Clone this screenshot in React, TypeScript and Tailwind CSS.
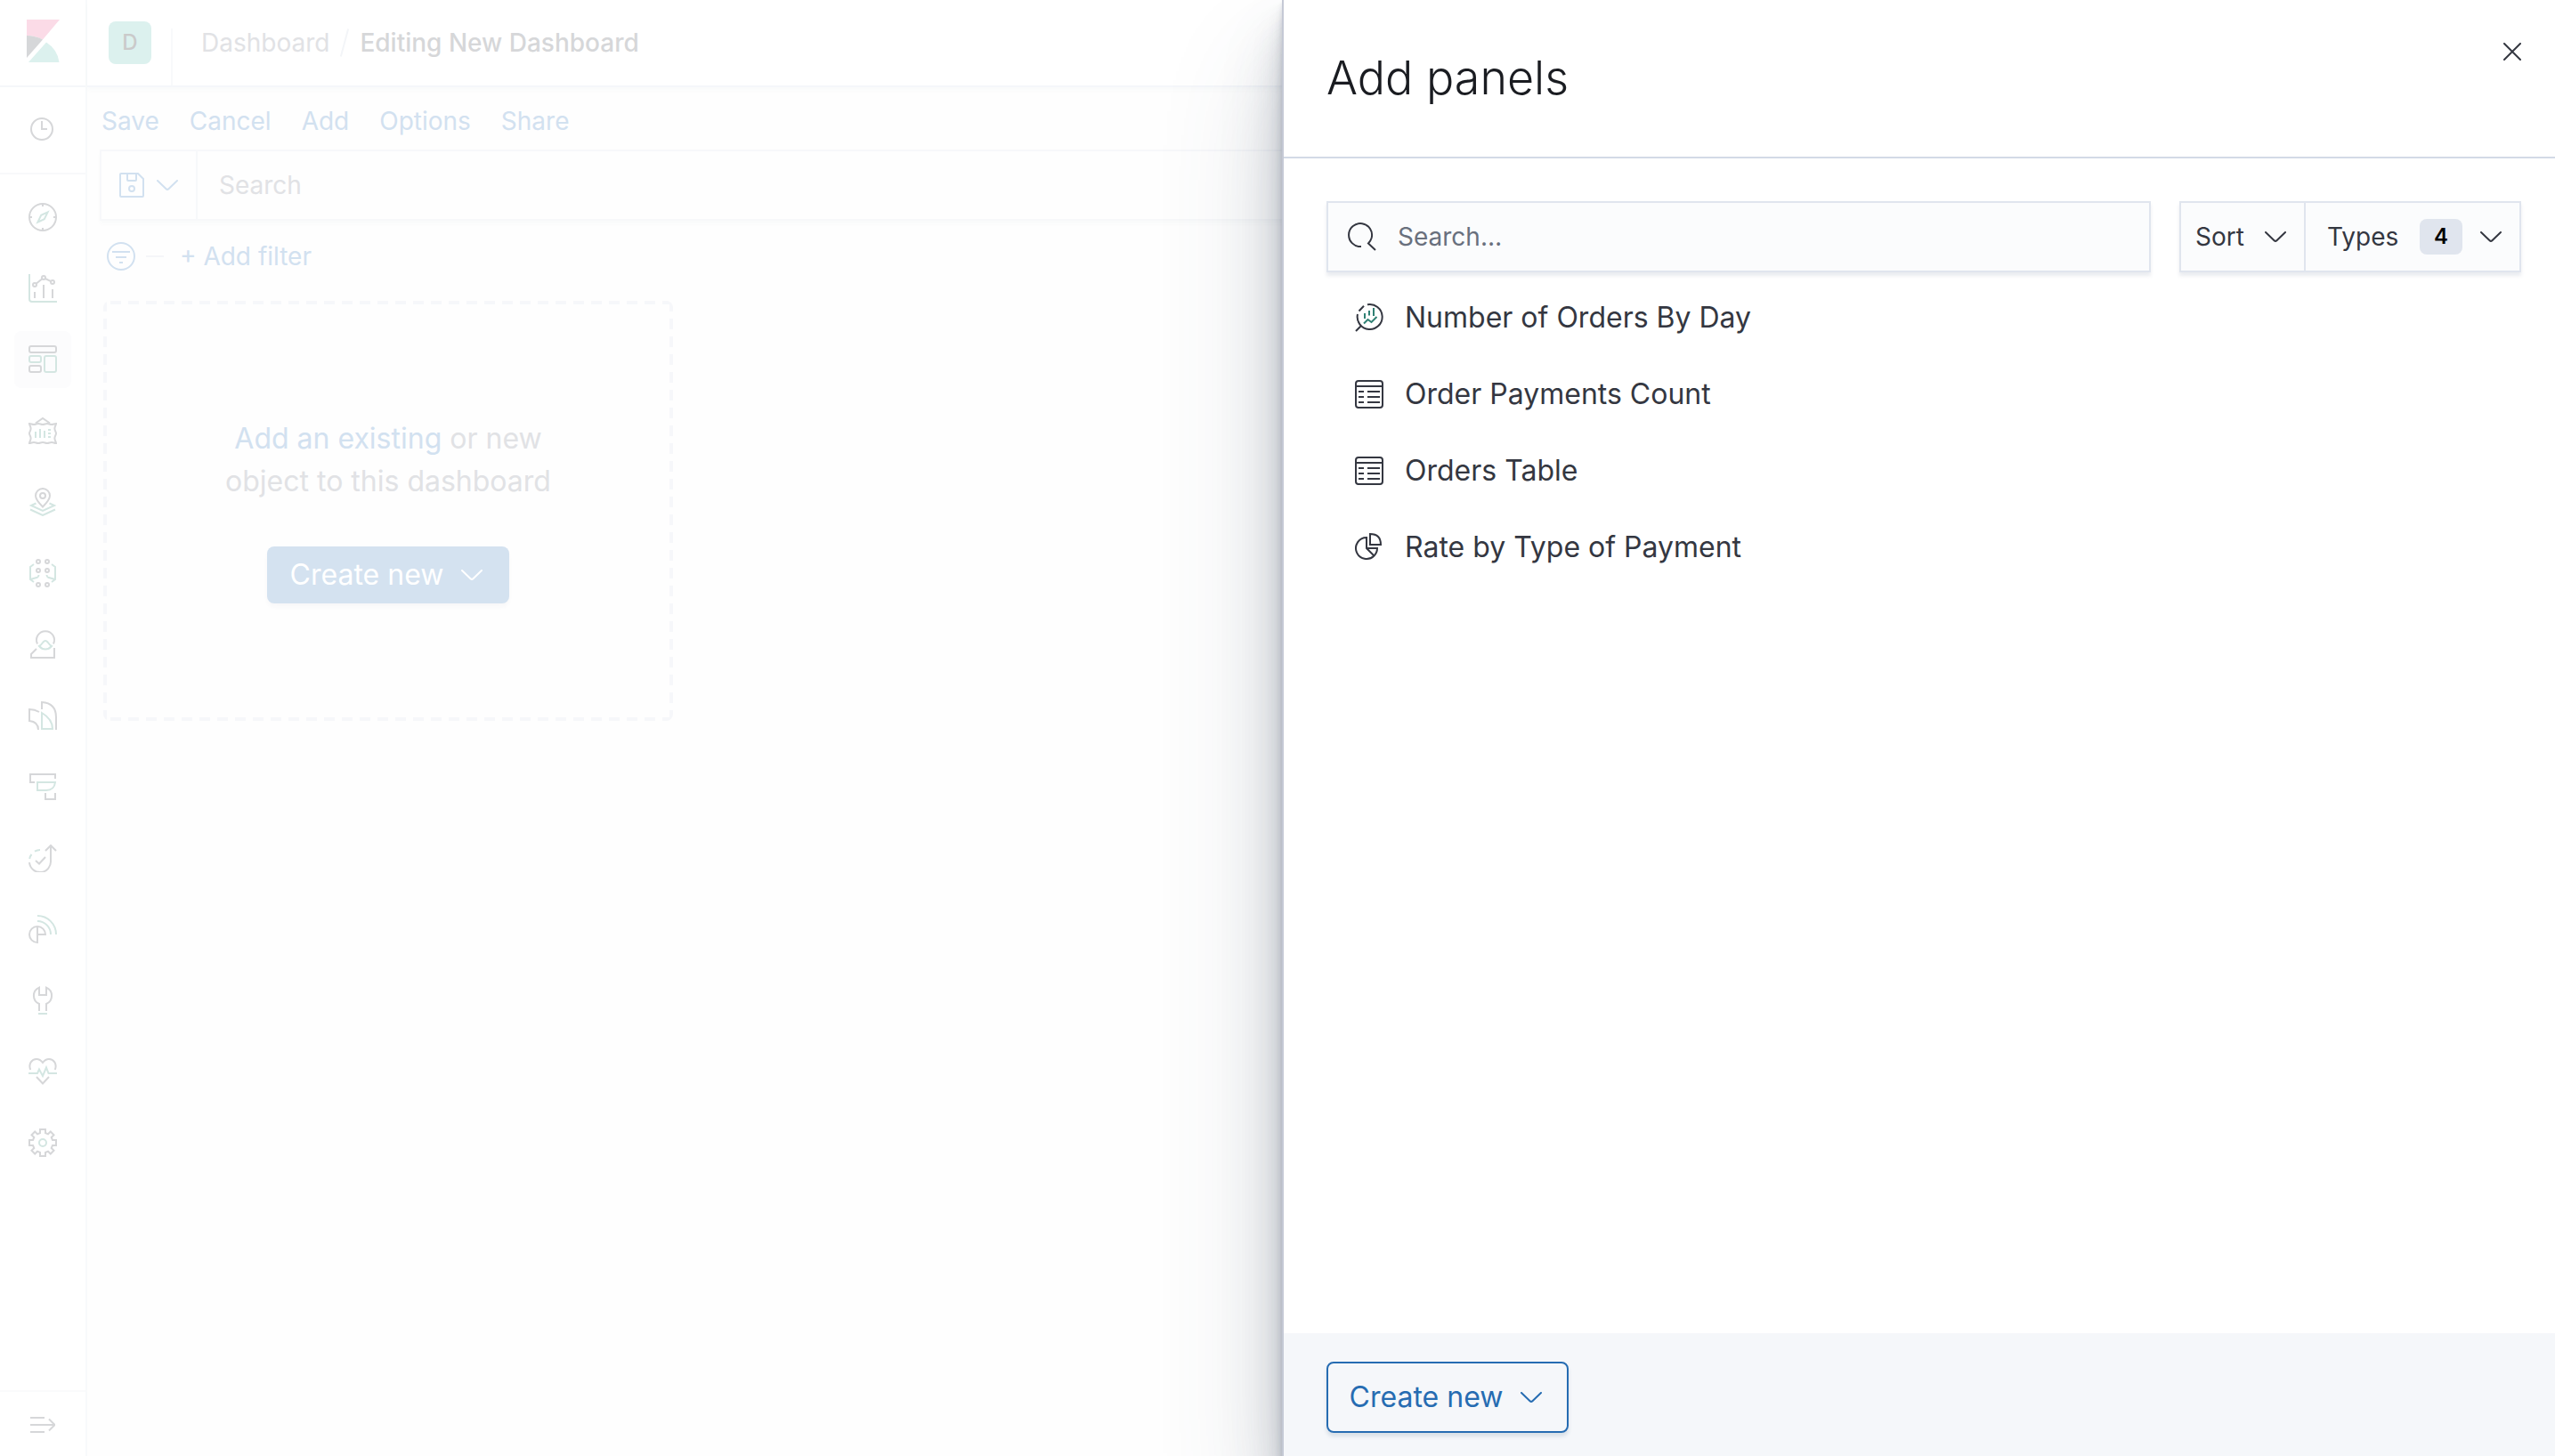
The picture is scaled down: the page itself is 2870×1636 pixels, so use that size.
import React from 'react';

const DARK = '#d6d7d9';
const TEAL = '#d4e6e2';

type IconProps = { children: React.ReactNode; size?: string; box?: string; className?: string };

function Icon({ children, size = 'size-8', box = '0 0 32 32', className = '' }: IconProps) {
  return (
    <svg
      viewBox={box}
      fill="none"
      stroke="currentColor"
      strokeWidth={2}
      aria-hidden="true"
      className={`${size} shrink-0 ${className}`}
    >
      {children}
    </svg>
  );
}

function Chevron() {
  return (
    <Icon size="h-3 w-6" box="0 0 24 12">
      <path d="M1 1l9.6 9.2a2 2 0 0 0 2.8 0L23 1" strokeLinecap="round" />
    </Icon>
  );
}

const navItems: { label: string; active?: boolean; icon: React.ReactNode }[] = [
  {
    label: 'Discover',
    icon: (
      <>
        <circle cx="16" cy="16" r="15" />
        <path d="M16 1v3M16 28v3M1 16h3M28 16h3" />
        <path d="M21.6 10.4l-7.4 3.4-3.8 7.8 7.4-3.4z" stroke={TEAL} />
      </>
    ),
  },
  {
    label: 'Visualize',
    icon: (
      <>
        <path d="M1 0v28a3 3 0 0 0 3 3h28" stroke={TEAL} />
        <path d="M7 20v7M17 12v15M27 17v10M8.6 10.7l6.8-5.4M18.8 5l6.4 3.1" />
        <circle cx="7" cy="12" r="2" />
        <circle cx="17" cy="4" r="2" />
        <circle cx="27" cy="9" r="2" />
      </>
    ),
  },
  {
    label: 'Dashboard',
    active: true,
    icon: (
      <>
        <rect x="1" y="1" width="30" height="7" rx="2" />
        <rect x="1" y="23" width="13" height="7" rx="2" />
        <rect x="1" y="12" width="13" height="7" rx="2" stroke={TEAL} />
        <rect x="18" y="12" width="13" height="18" rx="2" stroke={TEAL} />
      </>
    ),
  },
  {
    label: 'Canvas',
    icon: (
      <>
        <path d="M8 7.5L16 2l8 5.5" />
        <path d="M1 8c2 0 3 1 5 1s3-1 5-1 3 1 5 1 3-1 5-1 3 1 5 1 3-1 5-1c0 2-1.6 3-1.6 5.500S31 17 31 19s-1.600 3-1.600 5.500S31 28 31 30c-2 0-3-1-5-1s-3 1-5 1-3-1-5-1-3 1-5 1-3-1-5-1-3 1-5 1c0-2 1.600-3 1.600-5.500S1 21 1 19s1.600-3 1.600-5.500S1 10 1 8z" />
        <path d="M8 17v7M13 14v10M18 16v8M22 15h3M22 19h3M22 23h3" stroke={TEAL} />
      </>
    ),
  },
  {
    label: 'Maps',
    icon: (
      <>
        <path d="M16 21.500c-4-4-8-8-8-12.500a8 8 0 0 1 16 0c0 4.500-4 8.500-8 12.500z" />
        <circle cx="16" cy="9" r="3" />
        <path d="M8.500 17.500L3 20l13 6 13-6-5.500-2.500M2 24.500L16 31l14-6.500" stroke={TEAL} />
      </>
    ),
  },
  {
    label: 'Machine Learning',
    icon: (
      <>
        <circle cx="11" cy="3" r="2" />
        <circle cx="21" cy="3" r="2" />
        <circle cx="11" cy="13" r="2" />
        <circle cx="21" cy="13" r="2" />
        <circle cx="11" cy="29" r="2" />
        <circle cx="21" cy="29" r="2" />
        <path d="M6 6L2 9v14l4 3M2 23l8-2.300q1.500-.7 1.500-2.700M26 6l4 3v14l-4 3M30 23l-8-2.300q-1.500-.7-1.500-2.700" stroke={TEAL} />
      </>
    ),
  },
  {
    label: 'Infrastructure',
    icon: (
      <>
        <path d="M10 15.500a10 10 0 1 1 18 0M9 21l-6 6v4h26V20" />
        <path d="M12 18q2-1 4.500-4.500 2.500-3 5 0Q24 17 26 18q-3 3.500-7 3.500T12 18z" stroke={TEAL} />
      </>
    ),
  },
  {
    label: 'Logs',
    icon: (
      <>
        <path d="M12 12Q7 9 1 9v13q10 1 10 10M15 9V1q16 1 16 17v14" />
        <path d="M15 13v18h12q0-11-12-18z" stroke={TEAL} />
      </>
    ),
  },
  {
    label: 'APM',
    icon: (
      <>
        <path d="M7 11H2V2h28v5M19 23v7h11v-7" />
        <path d="M10 11h20q-1 9-10 9H10z" stroke={TEAL} />
      </>
    ),
  },
  {
    label: 'Uptime',
    icon: (
      <>
        <path d="M1 21a12 12 0 0 0 24-2V2M19 8l6-6 6 6M8 19l4 3.500 7-7.500" />
        <path d="M1.200 17q.5-3 2.300-5M7 8.700Q9.500 7 13 7" stroke={TEAL} />
      </>
    ),
  },
  {
    label: 'SIEM',
    icon: (
      <>
        <path d="M10 13v18a9 9 0 1 1 9-9h-9" />
        <path d="M10 7a15 15 0 0 1 15 15M10 1a21 21 0 0 1 21 21" stroke={TEAL} />
      </>
    ),
  },
  {
    label: 'Dev Tools',
    icon: (
      <>
        <path d="M12 28v-8a10 10 0 0 1 0-18.400V10h8V1.600A10 10 0 0 1 20 20v8" />
        <path d="M11 31h10" stroke={TEAL} />
      </>
    ),
  },
  {
    label: 'Stack Monitoring',
    icon: (
      <>
        <path d="M2.200 14C-.5 7 4 2 9 2q4 0 7 4 3-4 7-4c5 0 9.500 5 6.800 12M9 22l7 7.500 7-7.500" />
        <path d="M0 18h10l2-4.500 4 7.500 4-9.500 2.500 6.500H32" stroke={TEAL} />
      </>
    ),
  },
  {
    label: 'Management',
    icon: (
      <>
        <path d="M13 1h6v4l3 1.300 2.800-2.800 3.700 3.700-2.800 2.800L27 13h4v6h-4l-1.300 3 2.800 2.800-3.700 3.700-2.800-2.800L19 27v4h-6v-4l-3-1.300-2.800 2.800-3.700-3.700L6.300 22 5 19H1v-6h4l1.300-3-2.800-2.800 3.700-3.700L10 6.300 13 5z" />
        <circle cx="16" cy="16" r="4" stroke={TEAL} />
      </>
    ),
  },
];

function tableIcon() {
  return (
    <>
      <rect x="1" y="1" width="30" height="30" rx="3" />
      <path d="M1 7h30M4 13h6M14 13h14M4 19h6M14 19h14M4 25h6M14 25h14" />
    </>
  );
}

const savedObjects = [
  {
    title: 'Number of Orders By Day',
    icon: (
      <>
        <path d="M14 1.300A14 14 0 1 1 3 12M4.500 8.500L10 2.700M1 31l6-6" />
        <path d="M11 11v6M16 8v5.500M21 5v9M10 22.500l4.500-4.500 4 3 6-6" stroke="#2f8073" />
      </>
    ),
  },
  { title: 'Order Payments Count', icon: tableIcon() },
  { title: 'Orders Table', icon: tableIcon() },
  {
    title: 'Rate by Type of Payment',
    icon: (
      <>
        <path d="M13 5a12 12 0 1 0 8.500 20.500L13 17zM13 17h12q0 5-3.500 8.500" />
        <path d="M17 1v12h12Q29 1 17 1z" />
      </>
    ),
  },
];

function Sidebar() {
  return (
    <nav aria-label="Main" className="flex w-[98px] shrink-0 flex-col border-r-2 border-[#f8fafb] bg-white text-[#d6d7d9]">
      <a href="#home" aria-label="Kibana" className="flex h-[98px] shrink-0 items-center border-b-2 border-[#f5f7fa] pb-1 pl-[30px]">
        <svg viewBox="0 0 37 48" className="h-12 w-[37px]" aria-hidden="true">
          <path d="M0 0h37L18 22.500Q10 18 0 18z" fill="#fbdbe7" />
          <path d="M0 18q10 0 18 4.500L0 43z" fill={DARK} />
          <path d="M22 25.500Q35 34 36.500 48H2z" fill="#dcf1ee" />
        </svg>
      </a>
      <div className="flex h-[98px] shrink-0 items-center justify-center border-b-2 border-[#f8f9fb]">
        <button type="button" aria-label="Recently viewed" className="flex size-16 items-center justify-center">
          <Icon size="size-7" box="0 0 28 28">
            <circle cx="13" cy="13" r="12" />
            <path d="M13 4v9h6" />
          </Icon>
        </button>
      </div>
      <ul className="flex flex-1 flex-col items-center gap-4 pt-4">
        {navItems.map((item) => (
          <li key={item.label}>
            <a
              href={`#${item.label}`}
              aria-label={item.label}
              className={`flex size-16 items-center justify-center rounded-lg ${item.active ? 'bg-[#fcfcfd]' : ''}`}
            >
              <Icon>{item.icon}</Icon>
            </a>
          </li>
        ))}
      </ul>
      <button type="button" aria-label="Expand navigation" className="flex h-[74px] items-center justify-center border-t-2 border-[#fafbfc]">
        <Icon size="h-5 w-7" box="0 0 28 20">
          <path d="M0 3h16M0 11h27M0 19h16M21 4.500l6.500 6.500-6.500 6.500" />
        </Icon>
      </button>
    </nav>
  );
}

function DashboardPage() {
  return (
    <div className="flex min-w-0 flex-1 flex-col bg-[#fefefe]">
      <header className="flex h-[98px] items-center border-b-2 border-[#f5f7fa] bg-white pl-6 shadow-[0_4px_4px_rgba(65,78,101,0.02)]">
        <button type="button" aria-label="Default space" className="flex size-12 items-center justify-center rounded-lg bg-[#dcf1ee] text-2xl font-medium text-[#cacaca]">
          D
        </button>
        <nav aria-label="Breadcrumb" className="ml-[22px] flex h-16 items-center self-end border-l-2 border-[#f8f9fb] pb-8 pl-8 text-[28px] text-[#e1e2e5]">
          <ol className="flex items-center">
            <li>
              <a href="#dashboards">Dashboard</a>
            </li>
            <li aria-hidden="true" className="mx-4 h-8 w-[2px] rotate-[15deg] bg-[#f3f5f8]" />
            <li aria-current="page" className="font-medium text-[#d6d7d9]">
              Editing New Dashboard
            </li>
          </ol>
        </nav>
      </header>

      <main className="flex flex-col pl-3.5 text-[28px] text-[#d2e1f0]">
        <div className="flex h-[70px] items-center gap-[34px] pt-1.5 pl-0.5">
          {['Save', 'Cancel', 'Add', 'Options', 'Share'].map((label) => (
            <button key={label} type="button">
              {label}
            </button>
          ))}
        </div>

        <div className="flex h-20 border-2 border-[#f7f8fa] shadow-[0_4px_4px_rgba(65,78,101,0.02)]">
          <button type="button" aria-label="Saved queries" className="flex w-[108px] items-center gap-3.5 border-r-2 border-[#f7f8fa] pl-5">
            <Icon size="size-7" box="0 0 28 28">
              <path d="M1 2a1 1 0 0 1 1-1h19l6 6v19a1 1 0 0 1-1 1H2a1 1 0 0 1-1-1zM9 1v7a1 1 0 0 0 1 1h8a1 1 0 0 0 1-1V1" />
              <circle cx="14" cy="18" r="3" />
            </Icon>
            <Chevron />
          </button>
          <input
            type="text"
            aria-label="Query"
            placeholder="Search"
            className="flex-1 bg-transparent px-6 outline-none placeholder:text-[#e1e2e5]"
          />
        </div>

        <div className="flex h-20 items-center pl-2">
          <button type="button" aria-label="Filter options">
            <Icon>
              <circle cx="16" cy="16" r="15" />
              <path d="M6 11h20M10 17h12M14 23h4" />
            </Icon>
          </button>
          <span className="mx-3 w-5 border-t-2 border-[#f5f6f9]" />
          <button type="button" className="ml-1.5">
            + Add filter
          </button>
        </div>

        <section className="mt-2.5 ml-1 flex h-[472px] w-[640px] flex-col items-center rounded-lg pt-[131px] text-[32px] leading-[48px] text-[#e1e2e5] [background:repeating-linear-gradient(90deg,#f6f7fa_0_12px,transparent_12px_20px)_8px_0/100%_4px_no-repeat,repeating-linear-gradient(90deg,#f6f7fa_0_12px,transparent_12px_20px)_8px_100%/100%_4px_no-repeat,repeating-linear-gradient(#f6f7fa_0_12px,transparent_12px_20px)_0_0/4px_100%_no-repeat,repeating-linear-gradient(#f6f7fa_0_12px,transparent_12px_20px)_100%_0/4px_100%_no-repeat]">
          <p className="text-center">
            <a href="#add" className="text-[#d2e1f0]">
              Add an existing
            </a>{' '}
            or new
            <br />
            object to this dashboard
          </p>
          <button type="button" className="mt-[49px] flex h-16 w-[272px] items-center justify-center gap-5 rounded-lg bg-[#d4e2f0] pr-1 text-white shadow-[0_4px_4px_rgba(65,78,101,0.03)]">
            Create new
            <Chevron />
          </button>
        </section>
      </main>
    </div>
  );
}

function AddPanelsFlyout() {
  return (
    <aside
      role="dialog"
      aria-labelledby="flyout-title"
      className="absolute inset-y-0 right-0 flex w-[calc(50%-5px)] flex-col border-l-2 border-[#c5c9d5] bg-white text-[#343741] shadow-[0_80px_128px_rgba(65,78,101,0.2),0_48px_64px_rgba(65,78,101,0.18),0_32px_32px_rgba(65,78,101,0.15),0_16px_16px_rgba(65,78,101,0.12),0_8px_8px_rgba(65,78,101,0.1),0_4px_4px_rgba(65,78,101,0.1)]"
    >
      <header className="flex h-[178px] items-start justify-between border-b-2 border-[#d3dae6] pt-12 pr-[38px] pl-12">
        <h2 id="flyout-title" className="text-[52px] leading-[80px] font-light text-[#1a1c21]">
          Add panels
        </h2>
        <button type="button" aria-label="Close">
          <Icon size="size-5" box="0 0 20 20">
            <path d="M1 1l18 18M19 1L1 19" strokeLinecap="round" />
          </Icon>
        </button>
      </header>

      <div className="flex-1 pt-12 pr-[38px] pl-12">
        <div className="flex gap-8 text-[28px]">
          <label className="flex h-20 min-w-0 flex-1 items-center gap-6 border-2 border-[#e0e5ee] bg-[#fbfcfd] pl-[22px] shadow-[0_4px_4px_rgba(152,162,179,0.2)]">
            <Icon>
              <path d="M15 27A13 13 0 1 1 26.600 17.500Q25.500 21 23 23.500L31 31" />
            </Icon>
            <input
              type="search"
              aria-label="Search"
              placeholder="Search…"
              className="min-w-0 flex-1 bg-transparent outline-none placeholder:text-[#69707d]"
            />
          </label>
          <div className="flex h-20 border-2 border-[#e0e5ee] bg-[#fbfcfd] shadow-[0_4px_4px_rgba(152,162,179,0.2)]">
            <button type="button" className="flex w-[140px] items-center justify-between border-r-2 border-[#e0e5ee] pr-5 pl-4">
              Sort
              <Chevron />
            </button>
            <button type="button" className="flex w-60 items-center pr-5 pl-6">
              Types
              <span className="mr-5 ml-auto flex h-10 w-12 items-center justify-center rounded-lg bg-[#e0e5ee] text-2xl font-semibold text-black">
                4
              </span>
              <Chevron />
            </button>
          </div>
        </div>

        <ul className="flex flex-col pt-2 pl-8 text-[32px]">
          {savedObjects.map((item) => (
            <li key={item.title}>
              <button type="button" className="flex h-[86px] items-center gap-6">
                <Icon>{item.icon}</Icon>
                {item.title}
              </button>
            </li>
          ))}
        </ul>
      </div>

      <footer className="bg-[#f5f7fa] px-12 pt-8 pb-[26px]">
        <button type="button" className="flex h-20 w-[272px] items-center justify-center gap-5 rounded-lg border-2 border-[#266cb2] pr-1 text-[32px] text-[#266cb2] shadow-[0_4px_4px_rgba(54,97,126,0.15)]">
          Create new
          <Chevron />
        </button>
      </footer>
    </aside>
  );
}

export default function App() {
  return (
    <div className="relative flex min-h-screen overflow-hidden bg-white font-['Inter',sans-serif]">
      <Sidebar />
      <DashboardPage />
      <AddPanelsFlyout />
    </div>
  );
}
